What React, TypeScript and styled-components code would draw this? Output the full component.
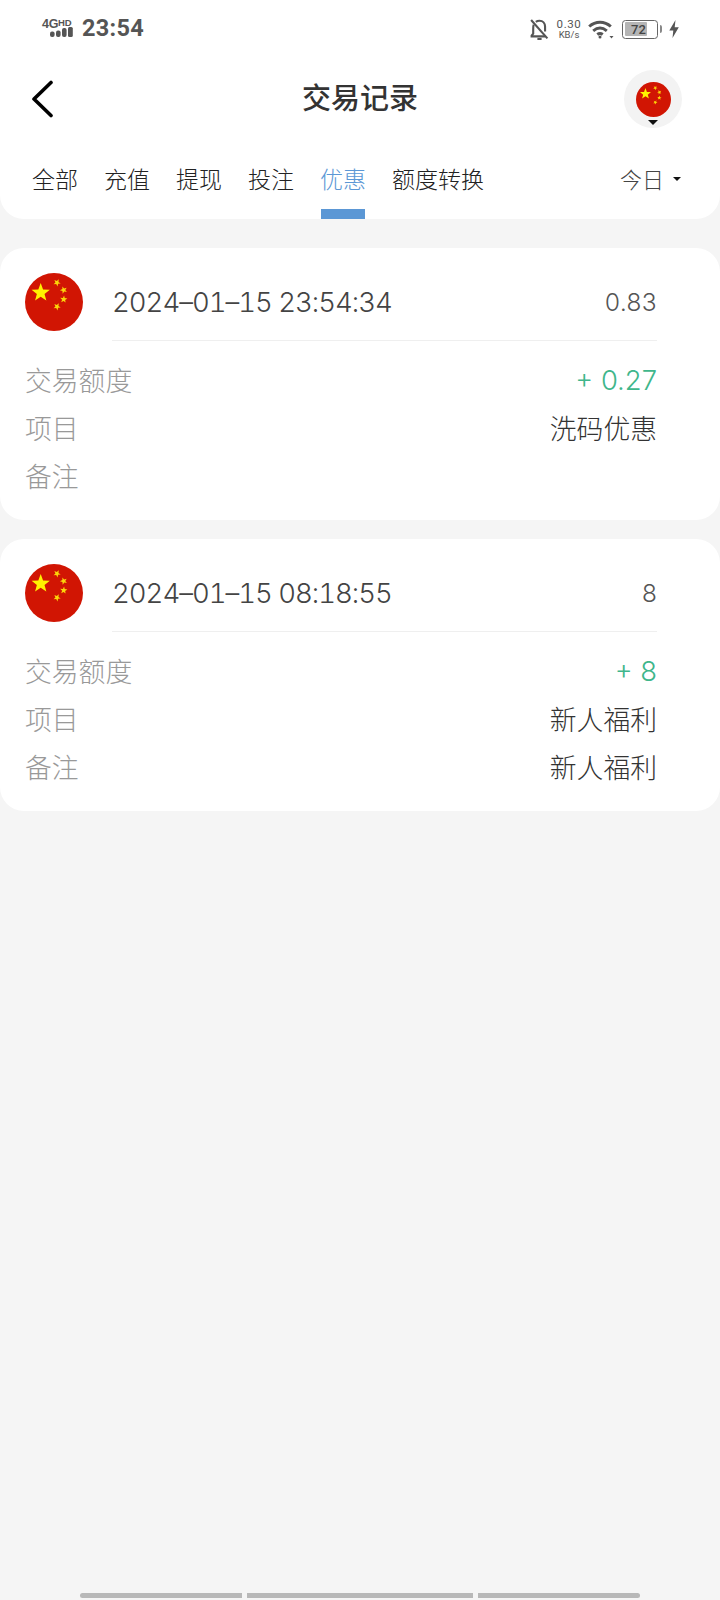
import styled, { createGlobalStyle } from "styled-components";

const GlobalStyle = createGlobalStyle`
  html, body {
    margin: 0;
    padding: 0;
    background: #f5f5f5;
  }
  * {
    box-sizing: border-box;
  }
`;

const cjk = `"Noto Sans CJK SC", "Noto Sans", sans-serif`;
const latin = `Inter, "Noto Sans CJK SC", sans-serif`;

const starPoints = (cx: number, cy: number, r: number, rot = 0) => {
  const pts: string[] = [];
  for (let i = 0; i < 10; i++) {
    const rad = i % 2 === 0 ? r : r * 0.42;
    const a = -Math.PI / 2 + (i * Math.PI) / 5 + rot;
    pts.push(`${(cx + rad * Math.cos(a)).toFixed(2)},${(cy + rad * Math.sin(a)).toFixed(2)}`);
  }
  return pts.join(" ");
};

const Flag = ({ size }: { size: number }) => (
  <svg width={size} height={size} viewBox="0 0 58 58" style={{ display: "block" }}>
    <circle cx="29" cy="29" r="29" fill="#d11503" />
    <polygon points={starPoints(15.7, 19.7, 9.6)} fill="#fff200" />
    <polygon points={starPoints(32, 9.7, 3.8, 0.5)} fill="#fbd60a" />
    <polygon points={starPoints(38.7, 17, 3.8, 0.9)} fill="#fbd60a" />
    <polygon points={starPoints(38.7, 26.3, 3.8, 0.1)} fill="#fbd60a" />
    <polygon points={starPoints(32, 33.7, 3.8, 0.5)} fill="#fbd60a" />
  </svg>
);

const SignalIcon = () => (
  <svg width="32" height="22" viewBox="0 0 32 22">
    <g fill="#555">
      <rect x="8" y="15.5" width="4.6" height="5.5" rx="2" />
      <rect x="14" y="14.500" width="4.6" height="6.5" rx="2" />
      <rect x="20" y="12" width="4.6" height="9" rx="2" />
      <rect x="26" y="11" width="4.8" height="10" rx="1.500" />
    </g>
  </svg>
);

const MutedBell = () => (
  <svg width="19" height="21" viewBox="0 0 18 20" fill="none" stroke="#555" strokeWidth="2">
    <path d="M3.500 5.500C3 6.500 3 7.500 3 9v5l-1.500 1.800V16.500h13" />
    <path d="M5.500 2.800C6.500 2 7.600 1.600 9 1.600c3.200 0 5.300 2.400 5.300 5.600v4.800" />
    <path d="M1 1l15.500 17.500" />
    <path d="M7 19h4" />
  </svg>
);

const WifiIcon = () => (
  <svg width="26" height="19" viewBox="0 0 26 19" fill="none" stroke="#555" strokeWidth="3">
    <path d="M1.200 6.500C7.500 .8 16.500 .8 22.800 6.500" />
    <path d="M5.200 10.800C9.500 7.300 14.500 7.300 18.800 10.800" />
    <path d="M9.300 14.500C11 13.200 13 13.200 14.700 14.500" />
    <circle cx="12" cy="17" r="1.500" fill="#555" stroke="none" />
    <path d="M21.500 16h4l-2 2.600z" fill="#555" stroke="none" />
  </svg>
);

const BoltIcon = () => (
  <svg width="10" height="18" viewBox="0 0 10 18">
    <path d="M6.500 0L0.300 10.500H4.300L3.500 18L9.800 7.200H5.700z" fill="#555" />
  </svg>
);

const Page = styled.div`
  width: 720px;
  min-height: 1600px;
  display: flex;
  flex-direction: column;
  background: #f5f5f5;
  font-family: ${cjk};
  overflow: hidden;
`;

const Header = styled.header`
  background: #fff;
  border-radius: 0 0 24px 24px;
  height: 219px;
  display: flex;
  flex-direction: column;
`;

const StatusBar = styled.div`
  height: 54px;
  padding: 16px 41px 0 42px;
  display: flex;
  align-items: flex-start;
  justify-content: space-between;
`;

const StatusLeft = styled.div`
  display: flex;
  align-items: flex-start;
  gap: 8px;
`;

const NetworkBadge = styled.div`
  width: 32px;
  position: relative;
  height: 22px;
  display: flex;
  align-items: flex-end;
`;

const NetworkLabel = styled.span`
  position: absolute;
  left: 0;
  top: 0;
  font: 700 12.500px/13px "Liberation Sans", sans-serif;
  color: #555;
  white-space: nowrap;
  letter-spacing: -0.300px;

  small {
    font-size: 9.500px;
    vertical-align: 2px;
  }
`;

const Clock = styled.span`
  font: 700 23.500px/24px Roboto, sans-serif;
  color: #555;
  letter-spacing: 0.300px;
`;

const StatusRight = styled.div`
  display: flex;
  align-items: center;
  height: 22px;
  margin-top: 2px;
`;

const Speed = styled.div`
  display: flex;
  flex-direction: column;
  align-items: center;
  width: 26px;
  margin: 0 6px 0 7px;
  font: 400 9.500px/10px Roboto, sans-serif;
  color: #555;
`;

const SpeedValue = styled.span`
  font-size: 11.500px;
  line-height: 11px;
  letter-spacing: 0.600px;
`;

const Battery = styled.div`
  position: relative;
  width: 36px;
  height: 19px;
  margin-left: 8px;
  border: 1.500px solid #666;
  border-radius: 3.500px;
  padding: 1.500px;
  font: 500 13px/13px Roboto, sans-serif;
  color: #444;
  text-align: center;

  &::after {
    content: "";
    position: absolute;
    right: -5px;
    top: 4px;
    width: 2px;
    height: 8px;
    border-radius: 0 2px 2px 0;
    background: #888;
  }
`;

const BatteryLevel = styled.div`
  height: 100%;
  background: #b5b5b5;
  border-radius: 1px;
`;

const BatteryLabel = styled.span`
  position: absolute;
  left: 0;
  right: 3px;
  top: 2px;
`;

const BoltSlot = styled.div`
  margin-left: 11px;
  display: flex;
`;

const NavBar = styled.div`
  height: 88px;
  padding: 2px 38px 0 31px;
  display: flex;
  align-items: center;
  justify-content: space-between;
  position: relative;
`;

const Title = styled.h1`
  position: absolute;
  left: 0;
  right: 0;
  margin: 0;
  top: 21px;
  text-align: center;
  font: 500 29px/42px ${cjk};
  color: #333;
`;

const AvatarButton = styled.div`
  position: relative;
  width: 58px;
  height: 58px;
  border-radius: 50%;
  background: #f3f3f3;
  display: flex;
  align-items: center;
  justify-content: center;
`;

const AvatarCaret = styled.span`
  position: absolute;
  left: 24px;
  bottom: 3px;
  border-style: solid;
  border-width: 5px 5px 0;
  border-color: #111 transparent transparent;
`;

const Tabs = styled.nav`
  flex: 1;
  padding: 0 39px 0 32px;
  display: flex;
  gap: 26px;
  align-items: stretch;
`;

const Tab = styled.div<{ $active?: boolean }>`
  position: relative;
  font: 300 23px/34px ${cjk};
  padding-top: 19px;
  color: ${(p) => (p.$active ? "#5b97d5" : "#222")};

  ${(p) =>
    p.$active &&
    `
    &::after {
      content: "";
      position: absolute;
      left: 1px;
      right: 1px;
      bottom: 0;
      height: 10px;
      background: #5b97d5;
    }
  `}
`;

const RangeFilter = styled.div`
  margin-left: auto;
  display: flex;
  align-items: flex-start;
  gap: 9px;
  padding-top: 19px;
  font: 300 22px/34px ${cjk};
  color: #444;
`;

const FilterCaret = styled.span`
  margin-top: 16px;
  border-style: solid;
  border-width: 4px 4px 0;
  border-color: #111 transparent transparent;
`;

const CardList = styled.main`
  padding-top: 29px;
  display: flex;
  flex-direction: column;
  gap: 19px;
`;

const Card = styled.section`
  height: 272px;
  background: #fff;
  border-radius: 24px;
  padding: 25px 63px 0 25px;
`;

const CardTop = styled.div`
  display: flex;
  gap: 29px;
  height: 68px;
`;

const CardHeadline = styled.div`
  flex: 1;
  height: 68px;
  padding-bottom: 10px;
  display: flex;
  align-items: center;
  justify-content: space-between;
  border-bottom: 1px solid #efefef;
  font: 300 27.500px/40px ${latin};
  font-variant-numeric: tabular-nums;
  letter-spacing: -1px;
  color: #444;
`;

const Amount = styled.span`
  font-size: 24.500px;
  letter-spacing: -0.400px;
  color: #555;
`;

const Details = styled.div`
  padding-top: 15px;
`;

const Row = styled.div`
  display: flex;
  justify-content: space-between;
  height: 48px;
  align-items: center;
`;

const RowLabel = styled.span`
  font: 300 26.800px/48px ${cjk};
  color: #999;
`;

const RowValue = styled.span<{ $credit?: boolean }>`
  font: 300 26.800px/48px ${cjk};
  color: ${(p) => (p.$credit ? "#3fb68b" : "#333")};
  ${(p) => p.$credit && `font-family: ${latin}; font-size: 27.400px;`}
`;

const HomeBar = styled.footer`
  margin-top: auto;
  padding: 0 80px 2px 80px;
  display: flex;
  gap: 5px;
`;

const HomeSegment = styled.div<{ $grow: number; $side?: "left" | "right" }>`
  height: 5px;
  flex: ${(p) => p.$grow} 0 0;
  background: #b8b8b8;
  border-radius: ${(p) =>
    p.$side === "left" ? "3px 0 0 3px" : p.$side === "right" ? "0 3px 3px 0" : "0"};
`;

const records = [
  { time: "2024–01–15 23:54:34", amount: "0.83", credit: "+ 0.27", item: "洗码优惠", note: "" },
  { time: "2024–01–15 08:18:55", amount: "8", credit: "+ 8", item: "新人福利", note: "新人福利" },
];

const tabs = ["全部", "充值", "提现", "投注", "优惠", "额度转换"];

export default function App() {
  return (
    <Page>
      <GlobalStyle />
      <Header>
        <StatusBar>
          <StatusLeft>
            <NetworkBadge>
              <NetworkLabel>
                4G<small>HD</small>
              </NetworkLabel>
              <SignalIcon />
            </NetworkBadge>
            <Clock>23:54</Clock>
          </StatusLeft>
          <StatusRight>
            <MutedBell />
            <Speed>
              <SpeedValue>0.30</SpeedValue>
              <span>KB/s</span>
            </Speed>
            <WifiIcon />
            <Battery>
              <BatteryLevel style={{ width: "72%" }} />
              <BatteryLabel>72</BatteryLabel>
            </Battery>
            <BoltSlot>
              <BoltIcon />
            </BoltSlot>
          </StatusRight>
        </StatusBar>
        <NavBar>
          <svg width="24" height="38" viewBox="0 0 24 38" fill="none" stroke="#000" strokeWidth="3.600" strokeLinecap="round" strokeLinejoin="round">
            <path d="M20 2.500L3 19l17 16.500" />
          </svg>
          <Title>交易记录</Title>
          <AvatarButton>
            <Flag size={35} />
            <AvatarCaret />
          </AvatarButton>
        </NavBar>
        <Tabs>
          {tabs.map((t) => (
            <Tab key={t} $active={t === "优惠"}>
              {t}
            </Tab>
          ))}
          <RangeFilter>
            今日
            <FilterCaret />
          </RangeFilter>
        </Tabs>
      </Header>
      <CardList>
        {records.map((r) => (
          <Card key={r.time}>
            <CardTop>
              <Flag size={58} />
              <CardHeadline>
                <span>{r.time}</span>
                <Amount>{r.amount}</Amount>
              </CardHeadline>
            </CardTop>
            <Details>
              <Row>
                <RowLabel>交易额度</RowLabel>
                <RowValue $credit>{r.credit}</RowValue>
              </Row>
              <Row>
                <RowLabel>项目</RowLabel>
                <RowValue>{r.item}</RowValue>
              </Row>
              <Row>
                <RowLabel>备注</RowLabel>
                <RowValue>{r.note}</RowValue>
              </Row>
            </Details>
          </Card>
        ))}
      </CardList>
      <HomeBar>
        <HomeSegment $grow={162} $side="left" />
        <HomeSegment $grow={226} />
        <HomeSegment $grow={162} $side="right" />
      </HomeBar>
    </Page>
  );
}
